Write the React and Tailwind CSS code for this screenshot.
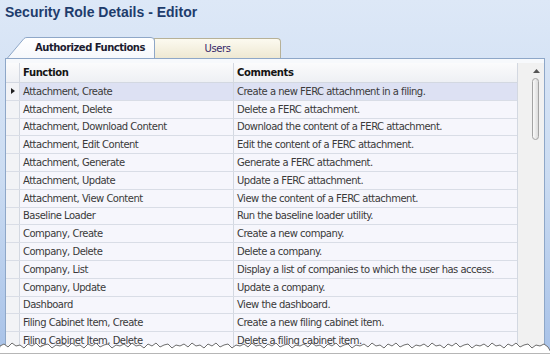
import React from "react";

const rows = [
  ["Attachment, Create", "Create a new FERC attachment in a filing."],
  ["Attachment, Delete", "Delete a FERC attachment."],
  ["Attachment, Download Content", "Download the content of a FERC attachment."],
  ["Attachment, Edit Content", "Edit the content of a FERC attachment."],
  ["Attachment, Generate", "Generate a FERC attachment."],
  ["Attachment, Update", "Update a FERC attachment."],
  ["Attachment, View Content", "View the content of a FERC attachment."],
  ["Baseline Loader", "Run the baseline loader utility."],
  ["Company, Create", "Create a new company."],
  ["Company, Delete", "Delete a company."],
  ["Company, List", "Display a list of companies to which the user has access."],
  ["Company, Update", "Update a company."],
  ["Dashboard", "View the dashboard."],
  ["Filing Cabinet Item, Create", "Create a new filing cabinet item."],
  ["Filing Cabinet Item, Delete", "Delete a filing cabinet item."],
];

function tornPoints() {
  const pts = [];
  const ys = [346, 344, 347, 343, 346, 345, 348, 344, 346, 343, 347, 345, 344, 348, 345];
  let i = 0;
  for (let x = 0; x <= 550; x += 4) {
    pts.push(`${x},${ys[i % ys.length]}`);
    i++;
  }
  pts.push("552,354", "-2,354");
  return pts.join(" ");
}

export default function App() {
  return (
    <div className="relative w-[550px] h-[354px] overflow-hidden bg-gradient-to-b from-[#dde8f7] via-[#cbdcf2] to-[#a8c2e8] font-['DejaVu_Sans',sans-serif]">
      <div className="h-[37px] pl-[5px] pt-[3px] text-[14px] leading-[18px] font-bold text-[#1e3c6c] font-['Liberation_Sans',sans-serif]">
        Security Role Details - Editor
      </div>
      <div className="relative h-[21px] flex items-end pl-[7px]">
        <div className="relative w-[148px] h-[21px] z-10">
          <svg className="absolute inset-0" width="148" height="21" viewBox="0 0 148 21">
            <defs>
              <linearGradient id="at" x1="0" y1="0" x2="0" y2="1">
                <stop offset="0" stopColor="#ffffff" />
                <stop offset="1" stopColor="#f6f8fc" />
              </linearGradient>
            </defs>
            <path d="M0.5,21 L17,1.5 Q18,0.5 20,0.5 L144,0.5 Q147.5,0.5 147.5,4 L147.5,21" fill="url(#at)" stroke="#8ea7c8" />
          </svg>
          <div className="relative flex items-center justify-center h-full pl-[18px] text-[10px] font-bold tracking-[-0.5px] text-[#1b1b2f]">
            Authorized Functions
          </div>
        </div>
        <div className="relative w-[127px] h-[20px] -ml-[1px] rounded-tr-[4px] border border-b-0 border-[#b7b197] bg-gradient-to-b from-[#fcfaf0] to-[#eee8d2] flex items-center justify-center text-[10px] tracking-[-0.4px] text-[#35286a]">
          Users
        </div>
      </div>
      <div className="ml-[5px] w-[540px] h-[300px] border border-[#8ea7c8] bg-[#f7f9fc] pt-[4px]">
        <div className="flex h-full bg-white">
          <div className="w-[511px] flex flex-col">
            <div className="flex shrink-0 h-[20px] bg-gradient-to-b from-[#fbfbfc] to-[#eef0f4] border-b border-[#d3d8e1] text-[10px] font-bold tracking-[-0.4px] text-[#141414]">
              <div className="w-[14px] border-r border-[#d3d8e1]" />
              <div className="w-[214px] border-r border-[#d3d8e1] flex items-center pl-[3px]">Function</div>
              <div className="flex-1 flex items-center pl-[3px]">Comments</div>
            </div>
            {rows.map((r, i) => (
              <div
                key={i}
                className={`flex h-[17.8px] border-b border-[#d9dde6] text-[10px] tracking-[-0.5px] text-[#3a3a3a] shrink-0 ${i === 0 ? "bg-[#dde1f3]" : "bg-[#f6f6fc]"}`}
              >
                <div className="w-[14px] border-r border-[#d3d8e1] bg-[#f2f3f6] flex items-center justify-center">
                  {i === 0 && (
                    <svg width="4" height="6" viewBox="0 0 4 6">
                      <path d="M0,0 L4,3 L0,6 Z" fill="#222" />
                    </svg>
                  )}
                </div>
                <div className="w-[214px] border-r border-[#d3d8e1] flex items-center pl-[3px] whitespace-nowrap overflow-hidden">{r[0]}</div>
                <div className="flex-1 flex items-center pl-[3px] whitespace-nowrap overflow-hidden">{r[1]}</div>
              </div>
            ))}
          </div>
          <div className="flex-1 border-l border-[#d3d8e1] bg-[#f1f1f1] relative">
            <svg className="absolute left-[15px] top-[6px]" width="7" height="4" viewBox="0 0 7 4">
              <path d="M0,4 L3.5,0 L7,4 Z" fill="#555" />
            </svg>
            <div className="absolute left-[14px] top-[15px] w-[7px] h-[62px] rounded-[4px] border border-[#a3a3a3] bg-gradient-to-r from-[#fafafa] to-[#dcdcdc]" />
          </div>
        </div>
      </div>
      <svg className="absolute left-0 top-0 pointer-events-none" width="550" height="354" viewBox="0 0 550 354">
        <polygon points={tornPoints()} fill="#ffffff" stroke="#6d6d6d" strokeWidth="1" />
      </svg>
    </div>
  );
}
